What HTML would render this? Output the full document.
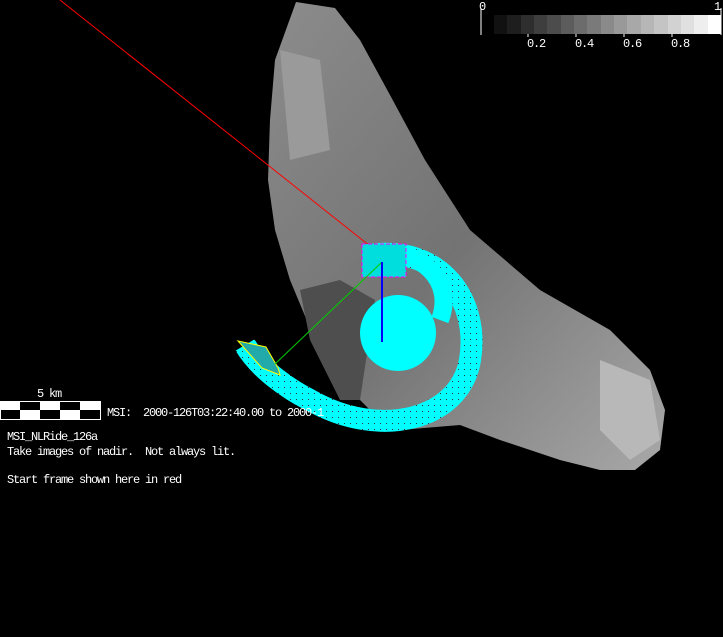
<!DOCTYPE html>
<html><head><meta charset="utf-8"><style>
html,body{margin:0;padding:0;background:#000;width:723px;height:637px;overflow:hidden}
.t{position:absolute;color:#fff;font:12px "Liberation Mono",monospace;letter-spacing:-1.2px;white-space:pre;line-height:14px}
</style></head><body>
<svg width="723" height="637" style="position:absolute;left:0;top:0">
<defs>
<linearGradient id="g" x1="0" y1="0" x2="1" y2="1">
<stop offset="0" stop-color="#8c8c8c"/><stop offset="0.5" stop-color="#737373"/><stop offset="1" stop-color="#a8a8a8"/>
</linearGradient>
<pattern id="p" width="6" height="6" patternUnits="userSpaceOnUse"><rect width="6" height="6" fill="#00ffff"/><rect x="2" y="3" width="1" height="1" fill="#333"/></pattern>
</defs>
<path d="M296,2 L335,8 L360,40 L390,95 L425,160 L470,230 L540,290 L610,330 L650,370 L665,410 L660,450 L635,470 L600,470 L560,460 L500,440 L460,425 L400,430 L370,410 L345,385 L315,340 L290,280 L275,230 L268,180 L270,120 L275,60 Z" fill="url(#g)"/>
<path d="M300,290 L340,280 L375,300 L360,400 L340,400 L310,340 Z" fill="#4e4e4e"/>
<path d="M280,50 L320,60 L330,150 L290,160 Z" fill="#9a9a9a"/>
<path d="M600,360 L650,380 L660,440 L630,460 L600,430 Z" fill="#b8b8b8"/>
<line x1="60" y1="0" x2="375" y2="250" stroke="#f00" stroke-width="1"/>
<path d="M370,255 C440,245 480,300 470,360 C460,420 380,440 310,400 C290,390 260,370 245,345" fill="none" stroke="url(#p)" stroke-width="22"/>
<path d="M380,252 C420,250 455,280 440,320" fill="none" stroke="#00ffff" stroke-width="18"/>
<circle cx="398" cy="333" r="38" fill="#00ffff"/>
<rect x="362" y="244" width="44" height="33" fill="#00dddd" stroke="#ff00ff" stroke-dasharray="4,2"/>
<polygon points="238,341 266,347 278,368 280,375 262,368" fill="#22aaaa" stroke="#ffff00"/>
<line x1="275" y1="364" x2="382" y2="262" stroke="#0c0"/>
<line x1="382" y1="262" x2="382" y2="342" stroke="#0000ff" stroke-width="2"/>
<line x1="481" y1="8" x2="481" y2="35" stroke="#fff"/>
<line x1="721" y1="8" x2="721" y2="35" stroke="#fff"/>
<g>
<rect x="494" y="15" width="14" height="19" fill="#111"/><rect x="507" y="15" width="14" height="19" fill="#1e1e1e"/>
<rect x="521" y="15" width="14" height="19" fill="#2e2e2e"/><rect x="534" y="15" width="14" height="19" fill="#3e3e3e"/>
<rect x="547" y="15" width="14" height="19" fill="#4c4c4c"/><rect x="561" y="15" width="14" height="19" fill="#5c5c5c"/>
<rect x="574" y="15" width="14" height="19" fill="#6c6c6c"/><rect x="587" y="15" width="14" height="19" fill="#7a7a7a"/>
<rect x="601" y="15" width="14" height="19" fill="#8a8a8a"/><rect x="614" y="15" width="14" height="19" fill="#999"/>
<rect x="627" y="15" width="14" height="19" fill="#a8a8a8"/><rect x="641" y="15" width="14" height="19" fill="#b6b6b6"/>
<rect x="654" y="15" width="14" height="19" fill="#c4c4c4"/><rect x="668" y="15" width="14" height="19" fill="#d2d2d2"/>
<rect x="681" y="15" width="14" height="19" fill="#e0e0e0"/><rect x="694" y="15" width="14" height="19" fill="#eee"/>
<rect x="708" y="15" width="13" height="19" fill="#fff"/>
</g>
<g stroke="#fff"><line x1="528" y1="34" x2="528" y2="37"/><line x1="576" y1="34" x2="576" y2="37"/><line x1="624" y1="34" x2="624" y2="37"/><line x1="672" y1="34" x2="672" y2="37"/></g>
<rect x="0.5" y="401.5" width="100" height="18" fill="#000" stroke="#fff"/>
<g fill="#fff">
<rect x="0" y="401" width="20" height="9"/><rect x="40" y="401" width="20" height="9"/><rect x="80" y="401" width="20" height="9"/>
<rect x="20" y="410" width="20" height="9"/><rect x="60" y="410" width="20" height="9"/>
</g>
</svg>
<div class="t" style="left:479px;top:0px">0</div>
<div class="t" style="left:714px;top:0px">1</div>
<div class="t" style="left:527px;top:37px">0.2</div>
<div class="t" style="left:575px;top:37px">0.4</div>
<div class="t" style="left:623px;top:37px">0.6</div>
<div class="t" style="left:671px;top:37px">0.8</div>
<div class="t" style="left:37px;top:387px">5 km</div>
<div class="t" style="left:107px;top:406px">MSI:  2000-126T03:22:40.00 to 2000-1</div>
<div class="t" style="left:7px;top:430px">MSI_NLRide_126a</div>
<div class="t" style="left:7px;top:445px">Take images of nadir.  Not always lit.</div>
<div class="t" style="left:7px;top:473px">Start frame shown here in red</div>
</body></html>
